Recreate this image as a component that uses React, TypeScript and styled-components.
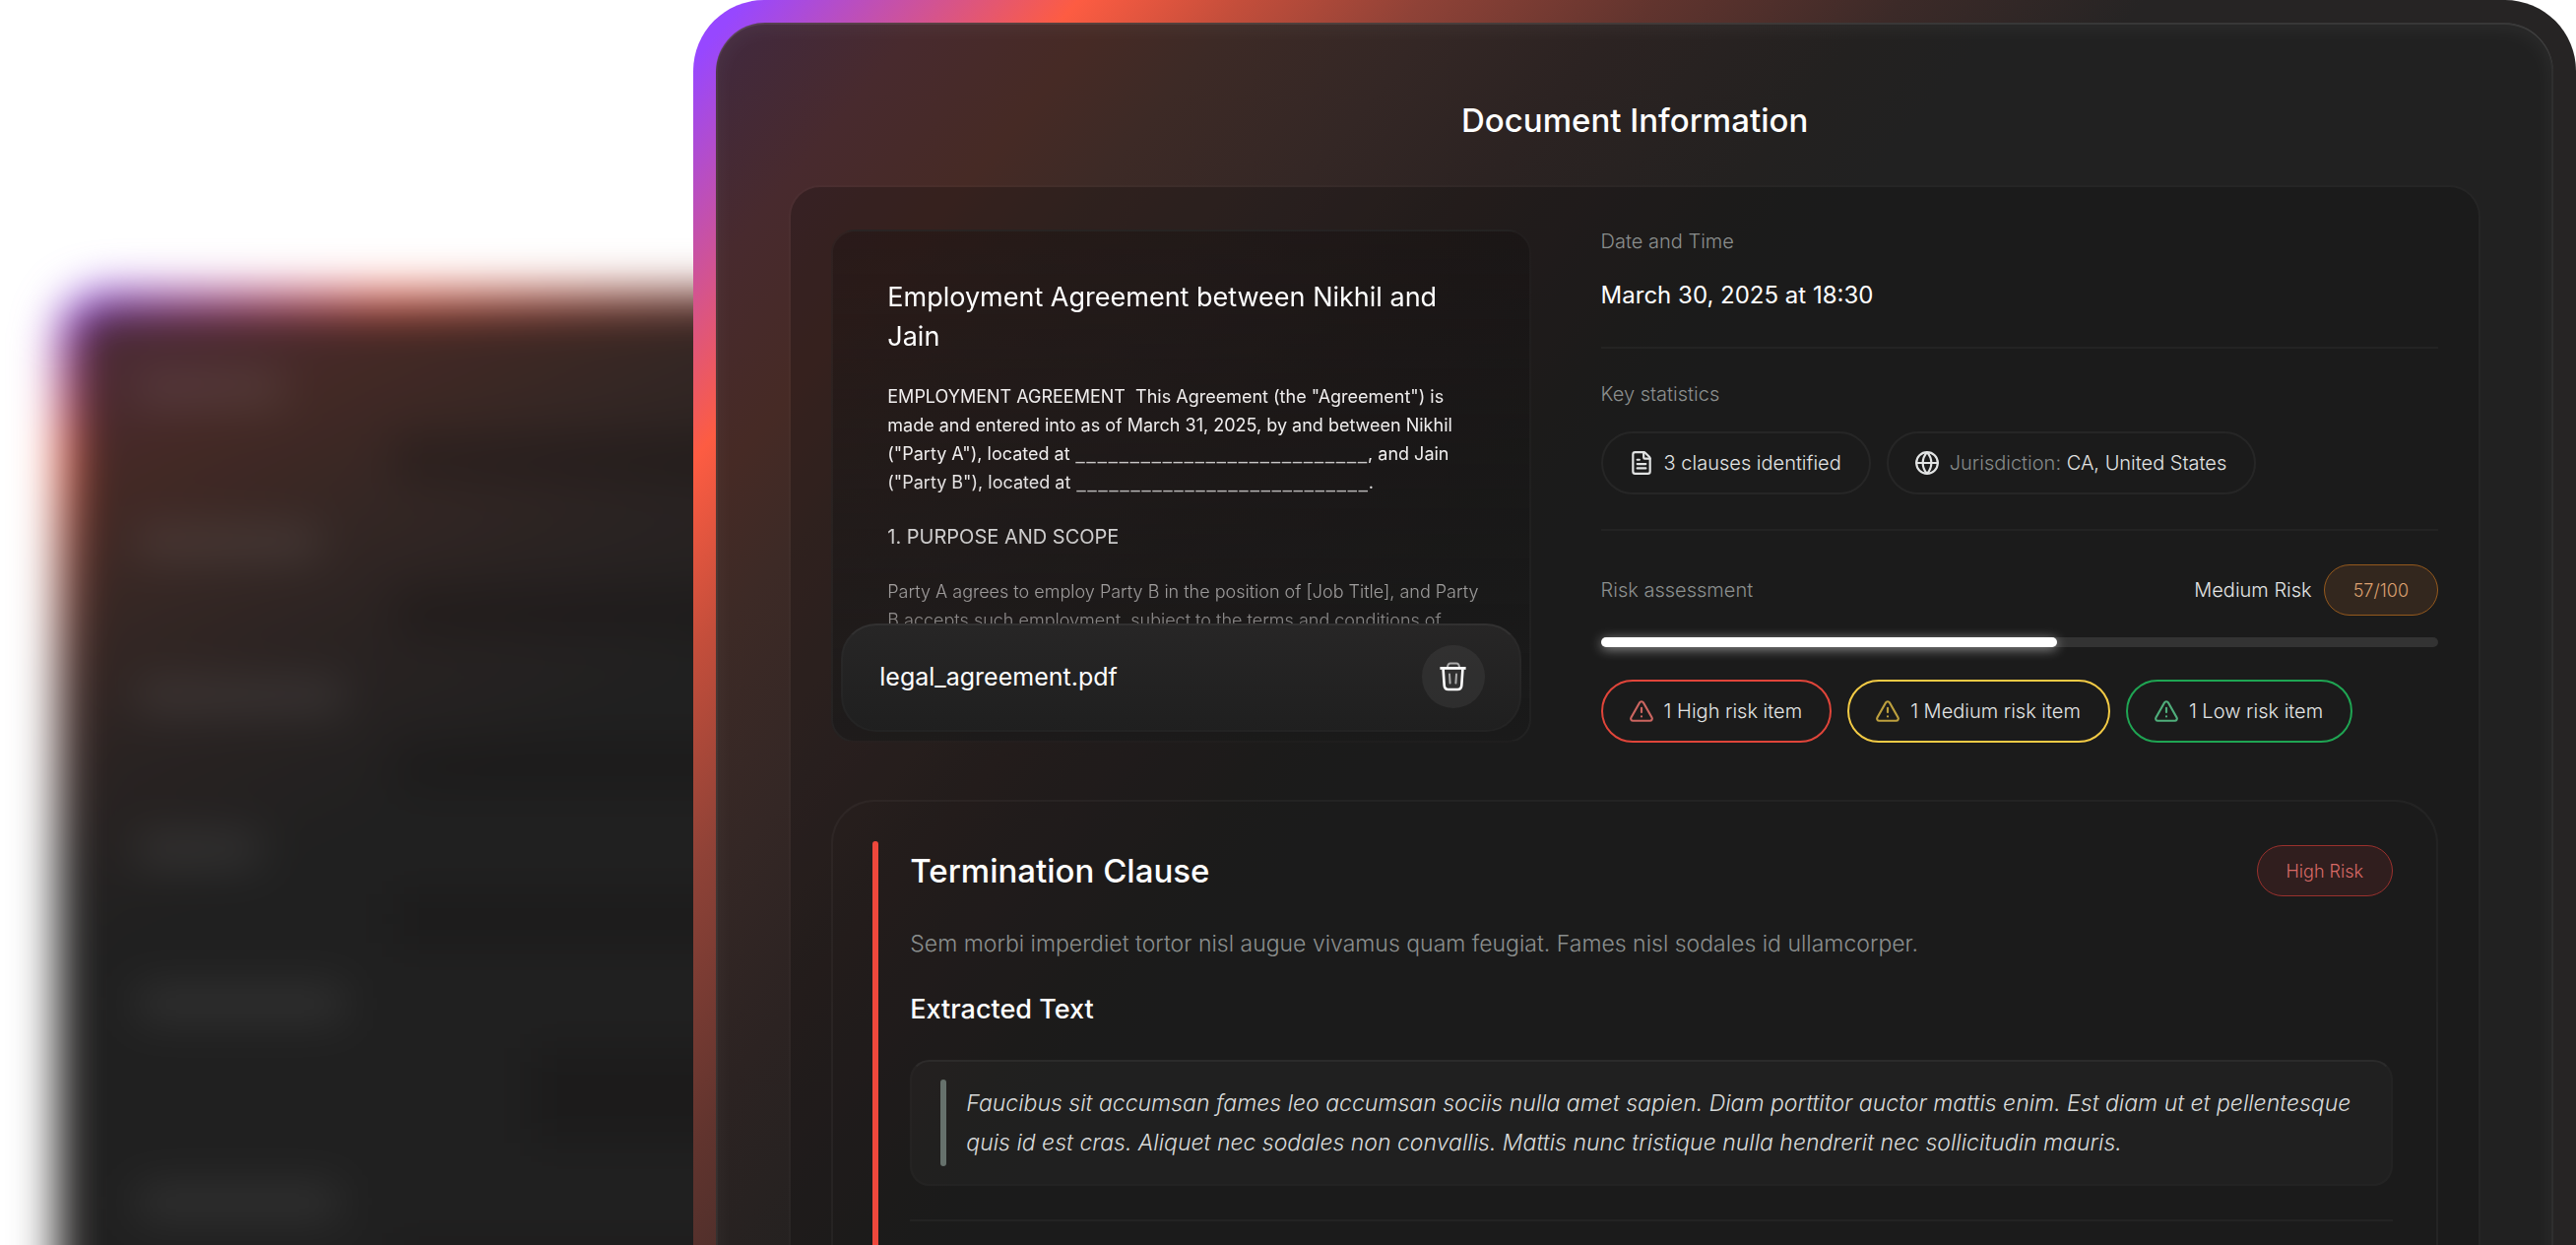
import React from "react";
import styled, { createGlobalStyle } from "styled-components";
import { FileText, Globe, TriangleAlert } from "lucide-react";

const GlobalStyle = createGlobalStyle`
  *, *::before, *::after { box-sizing: border-box; }
  body {
    margin: 0;
    background: #ffffff;
    color: #ffffff;
    font-family: Inter, "Liberation Sans", sans-serif;
  }
  h1, h2, h3, h4, p, ul { margin: 0; padding: 0; }
`;

const hairline = "rgba(255, 255, 255, 0.04)";

/* ---------- page ---------- */

const Page = styled.div`
  display: grid;
  grid-template-columns: 7fr 19fr;
  height: 100vh;
  overflow: hidden;
`;

/* ---------- blurred card in the background ---------- */

const Backdrop = styled.aside`
  display: flex;
  min-width: 0;
  padding-top: 294px;
  padding-left: 57px;
`;

const BackdropFrame = styled.div`
  flex: none;
  display: flex;
  width: 120%;
  height: 120vh;
  padding: 20px;
  border-radius: 52px;
  background: linear-gradient(
    155deg,
    #8a3cf0 20px,
    #fb5a42 150px,
    #a34637 250px,
    #5c332d 360px,
    #272423 540px
  );
  filter: blur(22px);
`;

const BackdropPanel = styled.div`
  flex: 1;
  display: flex;
  flex-direction: column;
  gap: 46px;
  padding: 66px 0 0 62px;
  border-radius: 32px;
  background: linear-gradient(155deg, #4c2c3a 0, #4a2a2f 90px, #442925 170px, #352724 300px, #2a2322 420px, #202020 600px);
`;

const BackdropRow = styled.div`
  display: flex;
  flex-direction: column;
  gap: 30px;
`;

const BackdropHeading = styled.div<{ $width: number }>`
  width: ${(p) => p.$width}px;
  height: 30px;
  border-radius: 8px;
  background: rgba(255, 255, 255, 0.09);
`;

const BackdropField = styled.div<{ $indent: number; $tall?: boolean }>`
  height: ${(p) => (p.$tall ? 96 : 50)}px;
  margin-left: ${(p) => p.$indent}px;
  background: rgba(20, 18, 18, 0.3);
`;

/* ---------- foreground window ---------- */

const Frame = styled.main`
  position: relative;
  display: flex;
  min-width: 0;
  padding: 23px 23px 0;
  border-radius: 72px 72px 0 0;
  background: linear-gradient(
    130deg,
    #9747ff 40px,
    #fd5c42 300px,
    #c44e3b 425px,
    #8f4237 567px,
    #61342e 750px,
    #3c2a28 940px,
    #262424 1130px
  );
`;

const Panel = styled.div`
  flex: 1;
  display: flex;
  flex-direction: column;
  min-width: 0;
  padding: 0 74px;
  border-radius: 50px 50px 0 0;
  background: linear-gradient(
    130deg,
    #42293c 30px,
    #482a2e 160px,
    #462a25 300px,
    #3d2a26 400px,
    #342725 560px,
    #2c2322 700px,
    #232120 900px,
    #212121 1000px
  );
  box-shadow:
    inset 0 2px 0 rgba(255, 255, 255, 0.08),
    inset -2px 0 0 rgba(255, 255, 255, 0.04),
    inset 2px 0 0 rgba(255, 255, 255, 0.04),
    inset 0 4px 24px rgba(255, 255, 255, 0.06);
`;

const PageTitle = styled.h1`
  padding: 79px 0 46px;
  font-size: 33px;
  line-height: 40px;
  font-weight: 500;
  text-align: center;
`;

const Content = styled.div`
  flex: 1;
  display: flex;
  flex-direction: column;
  gap: 58px;
  padding: 43px 41px 0;
  border: 2px solid rgba(255, 255, 255, 0.02);
  border-bottom: 0;
  border-radius: 32px 32px 0 0;
  background: rgba(10, 10, 10, 0.27);
  background-clip: padding-box;
`;

const Summary = styled.section`
  display: grid;
  grid-template-columns: 71fr 85fr;
  gap: 71px;
`;

/* ---------- document preview ---------- */

const Preview = styled.article`
  display: flex;
  flex-direction: column;
  height: 521px;
  border: 2px solid rgba(255, 255, 255, 0.035);
  border-radius: 24px;
  background: linear-gradient(rgba(15, 12, 12, 0.3), rgba(26, 26, 26, 0.7));
`;

const PreviewBody = styled.div`
  flex: 1;
  display: flex;
  flex-direction: column;
  gap: 26px;
  min-height: 0;
  overflow: hidden;
  padding: 47px 42px 0 55px;
  mask-image: linear-gradient(#000 60%, rgba(0, 0, 0, 0.5) 100%);
`;

const PreviewTitle = styled.h2`
  flex: none;
  font-size: 27px;
  line-height: 40px;
  font-weight: 400;
`;

const PreviewHeading = styled.h3`
  flex: none;
  font-size: 20px;
  line-height: 30px;
  font-weight: 400;
`;

const PreviewText = styled.p<{ $light?: boolean }>`
  flex: none;
  color: #f0eeee;
  font-size: 18px;
  line-height: 29px;
  font-weight: ${(p) => (p.$light ? 300 : 400)};
  white-space: pre-wrap;
`;

const Blank = styled.span`
  color: #c8c6c6;
  font-family: Lato, sans-serif;
  font-size: 24px;
  line-height: 0;
`;

const FileBar = styled.footer`
  display: flex;
  align-items: center;
  justify-content: space-between;
  height: 110px;
  margin: 0 8px 9px;
  padding: 0 35px 2px 37px;
  border: 2px solid rgba(255, 255, 255, 0.02);
  border-top-color: rgba(255, 255, 255, 0.05);
  border-radius: 36px;
  background: linear-gradient(#272626, #1f1f1f) border-box;
`;

const FileName = styled.span`
  font-size: 25px;
  line-height: 32px;
`;

const IconButton = styled.button`
  display: grid;
  place-items: center;
  width: 64px;
  height: 64px;
  padding: 0;
  border: 0;
  border-radius: 50%;
  background: rgba(255, 255, 255, 0.06);
  color: #ffffff;
  cursor: pointer;
`;

/* ---------- facts column ---------- */

const Facts = styled.div`
  display: flex;
  flex-direction: column;
  gap: 34px;
  min-width: 0;
`;

const Fact = styled.div`
  display: flex;
  flex-direction: column;
  gap: 26px;
  padding-bottom: 35px;
  border-bottom: 2px solid ${hairline};
`;

const Label = styled.h3`
  color: #8b8f8e;
  font-size: 20px;
  line-height: 24px;
  font-weight: 300;
`;

const Value = styled.p`
  font-size: 24px;
  line-height: 34px;
`;

const Chips = styled.ul`
  display: flex;
  flex-wrap: wrap;
  gap: 16px;
  list-style: none;
`;

const Chip = styled.li<{ $border: string; $icon: string }>`
  display: flex;
  align-items: center;
  gap: 10px;
  height: 64px;
  padding: 0 28px 0 26px;
  border: 2px solid ${(p) => p.$border};
  border-radius: 32px;
  color: #e2e4e4;
  font-size: 20px;
  font-weight: 300;
  white-space: nowrap;

  svg { color: ${(p) => p.$icon}; }
`;

const Muted = styled.span`
  color: #858a89;
`;

const Risk = styled.div`
  display: flex;
  flex-direction: column;
`;

const RiskHeader = styled.div`
  display: flex;
  align-items: center;
  justify-content: space-between;
`;

const RiskScore = styled.div`
  display: flex;
  align-items: center;
  gap: 12px;
  color: #e2e4e4;
  font-size: 20px;
  font-weight: 300;
`;

const Badge = styled.span<{ $tone: "orange" | "red" }>`
  display: grid;
  place-items: center;
  height: 52px;
  padding: 0 29px;
  border: 1px solid ${(p) => (p.$tone === "orange" ? "#95591d" : "#9a312d")};
  border-radius: 26px;
  background: ${(p) => (p.$tone === "orange" ? "#33271e" : "#301e1e")};
  color: ${(p) => (p.$tone === "orange" ? "#dca070" : "#d96a66")};
  font-size: 18px;
  font-weight: 300;
`;

const Track = styled.div`
  height: 10px;
  margin: 22px 0 33px;
  border-radius: 5px;
  background: #333333;
`;

const TrackFill = styled.div`
  height: 100%;
  border-radius: 5px;
  background: #ffffff;
  box-shadow: 0 2px 12px rgba(255, 255, 255, 0.55);
`;

/* ---------- clause ---------- */

const Clause = styled.section`
  flex: 1;
  display: flex;
  gap: 32px;
  padding: 40px 44px 0 40px;
  border: 2px solid ${hairline};
  border-bottom: 0;
  border-radius: 44px 44px 0 0;
`;

const SeverityBar = styled.div`
  flex: none;
  width: 6px;
  border-radius: 3px 3px 0 0;
  background: #ee483c;
`;

const ClauseBody = styled.div`
  flex: 1;
  display: flex;
  flex-direction: column;
  gap: 28px;
  min-width: 0;
`;

const ClauseHeader = styled.header`
  display: flex;
  align-items: center;
  justify-content: space-between;
  height: 60px;
`;

const ClauseTitle = styled.h2`
  font-size: 33px;
  line-height: 40px;
  font-weight: 500;
`;

const ClauseText = styled.p`
  color: #8b8f8e;
  font-size: 23px;
  line-height: 32px;
  font-weight: 300;
`;

const ClauseSubtitle = styled.h3`
  font-size: 27px;
  line-height: 46px;
  font-weight: 500;
`;

const Quote = styled.blockquote`
  display: flex;
  gap: 20px;
  margin: 0;
  padding: 18px 30px 18px 29px;
  border: 2px solid rgba(255, 255, 255, 0.02);
  border-top-color: rgba(255, 255, 255, 0.05);
  border-radius: 20px;
  background: rgba(255, 255, 255, 0.022);
`;

const QuoteMark = styled.div`
  flex: none;
  width: 6px;
  border-radius: 3px;
  background: #66716c;
`;

const QuoteText = styled.p`
  padding: 4px 0;
  color: #d8dada;
  font-size: 23px;
  line-height: 40px;
  font-style: italic;
  font-weight: 300;
`;

const Divider = styled.hr`
  width: 100%;
  height: 2px;
  margin: 6px 0 0;
  border: 0;
  background: ${hairline};
`;

function TrashIcon() {
  return (
    <svg width="32" height="32" viewBox="0 0 32 32" fill="none" stroke="currentColor" aria-hidden="true">
      <path d="M10 6.6C10.2 3.6 10.9 2.6 13 2.6h6c2.1 0 2.8 1 3 4" strokeWidth="2" opacity="0.6" />
      <path d="M2.4 7.4h26.2" strokeWidth="2.8" />
      <path d="M5.6 8.4l1.1 16.4c.2 2.7 1.5 4.2 4.2 4.2h9.2c2.7 0 4-1.5 4.2-4.2l1.1-16.4" strokeWidth="2.6" />
      <path d="M12 13.6l.6 9M19 13.6l-.6 9" strokeWidth="2" strokeLinecap="round" opacity="0.6" />
    </svg>
  );
}

const backdropRows = [
  { heading: 150, indent: 260 },
  { heading: 185, indent: 260 },
  { heading: 210, indent: 260 },
  { heading: 125, indent: 260 },
  { heading: 210, indent: 400, tall: true },
  { heading: 205, indent: 260 },
];

const riskItems = [
  { text: "1 High risk item", border: "#e0453a", icon: "#cb6560" },
  { text: "1 Medium risk item", border: "#f3cb45", icon: "#bda03e" },
  { text: "1 Low risk item", border: "#1fa553", icon: "#4fae7b" },
];

const blank = "_".repeat(27);
const riskProgress = 54.5;

export default function App() {
  return (
    <>
      <GlobalStyle />
      <Page>
        <Backdrop aria-hidden="true">
          <BackdropFrame>
            <BackdropPanel>
              {backdropRows.map((row, i) => (
                <BackdropRow key={i}>
                  <BackdropHeading $width={row.heading} />
                  <BackdropField $indent={row.indent} $tall={row.tall} />
                </BackdropRow>
              ))}
            </BackdropPanel>
          </BackdropFrame>
        </Backdrop>

        <Frame>
          <Panel>
            <PageTitle>Document Information</PageTitle>
            <Content>
              <Summary>
                <Preview>
                  <PreviewBody>
                    <PreviewTitle>Employment Agreement between Nikhil and Jain</PreviewTitle>
                    <PreviewText>
                      {'EMPLOYMENT AGREEMENT  This Agreement (the "Agreement") is made and entered into as of March 31, 2025, by and between Nikhil ("Party A"), located at '}
                      <Blank>{blank}</Blank>
                      {', and Jain ("Party B"), located at '}
                      <Blank>{blank}</Blank>.
                    </PreviewText>
                    <PreviewHeading>1. PURPOSE AND SCOPE</PreviewHeading>
                    <PreviewText $light>
                      Party A agrees to employ Party B in the position of [Job Title], and Party B accepts such
                      employment, subject to the terms and conditions of
                    </PreviewText>
                  </PreviewBody>
                  <FileBar>
                    <FileName>legal_agreement.pdf</FileName>
                    <IconButton type="button" aria-label="Delete file">
                      <TrashIcon />
                    </IconButton>
                  </FileBar>
                </Preview>

                <Facts>
                  <Fact>
                    <Label>Date and Time</Label>
                    <Value>March 30, 2025 at 18:30</Value>
                  </Fact>
                  <Fact>
                    <Label>Key statistics</Label>
                    <Chips>
                      <Chip $border="rgba(255, 255, 255, 0.05)" $icon="#e2e4e4">
                        <FileText size={26} strokeWidth={2} />
                        3 clauses identified
                      </Chip>
                      <Chip $border="rgba(255, 255, 255, 0.05)" $icon="#e2e4e4">
                        <Globe size={26} strokeWidth={2} />
                        <span>
                          <Muted>Jurisdiction:</Muted> CA, United States
                        </span>
                      </Chip>
                    </Chips>
                  </Fact>
                  <Risk>
                    <RiskHeader>
                      <Label>Risk assessment</Label>
                      <RiskScore>
                        Medium Risk <Badge $tone="orange">57/100</Badge>
                      </RiskScore>
                    </RiskHeader>
                    <Track role="progressbar" aria-label="Risk assessment" aria-valuenow={57} aria-valuemin={0} aria-valuemax={100}>
                      <TrackFill style={{ width: `${riskProgress}%` }} />
                    </Track>
                    <Chips>
                      {riskItems.map((item) => (
                        <Chip key={item.text} $border={item.border} $icon={item.icon}>
                          <TriangleAlert size={26} strokeWidth={2} />
                          {item.text}
                        </Chip>
                      ))}
                    </Chips>
                  </Risk>
                </Facts>
              </Summary>

              <Clause>
                <SeverityBar />
                <ClauseBody>
                  <ClauseHeader>
                    <ClauseTitle>Termination Clause</ClauseTitle>
                    <Badge $tone="red">High Risk</Badge>
                  </ClauseHeader>
                  <ClauseText>
                    Sem morbi imperdiet tortor nisl augue vivamus quam feugiat. Fames nisl sodales id ullamcorper.
                  </ClauseText>
                  <ClauseSubtitle>Extracted Text</ClauseSubtitle>
                  <Quote>
                    <QuoteMark />
                    <QuoteText>
                      Faucibus sit accumsan fames leo accumsan sociis nulla amet sapien. Diam porttitor auctor mattis
                      enim. Est diam ut et pellentesque quis id est cras. Aliquet nec sodales non convallis. Mattis nunc
                      tristique nulla hendrerit nec sollicitudin mauris.
                    </QuoteText>
                  </Quote>
                  <Divider />
                </ClauseBody>
              </Clause>
            </Content>
          </Panel>
        </Frame>
      </Page>
    </>
  );
}
